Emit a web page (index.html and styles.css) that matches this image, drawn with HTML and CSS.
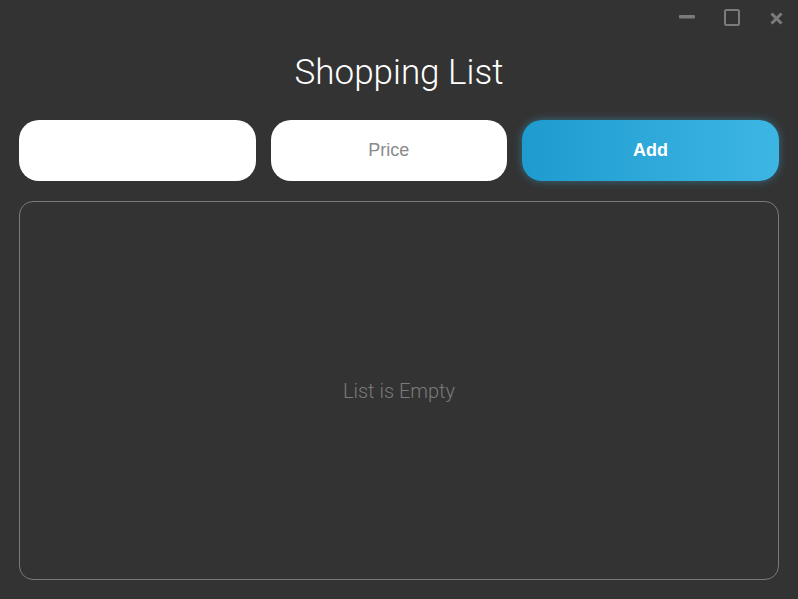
FILE: index.html
```html
<!DOCTYPE html>
<html>
<head>
<meta charset="utf-8">
<link rel="stylesheet" href="styles.css">
</head>
<body>
<div class="app">
  <div class="titlebar">
    <svg class="ctl" viewBox="0 0 20 20" width="20" height="20"><rect x="2" y="7" width="16" height="3.5" rx="1" fill="#7b7b7b"/></svg>
    <svg class="ctl" viewBox="0 0 20 20" width="20" height="20"><rect x="3" y="2" width="14" height="15" rx="1.5" fill="none" stroke="#7b7b7b" stroke-width="2"/></svg>
    <svg class="ctl" viewBox="0 0 20 20" width="20" height="20"><path d="M4.5 5.5 L14.5 15.5 M14.5 5.5 L4.5 15.5" stroke="#7b7b7b" stroke-width="3" stroke-linecap="butt"/></svg>
  </div>
  <h1 class="title">Shopping List</h1>
  <div class="form">
    <input class="field" type="text">
    <input class="field" type="text" placeholder="Price">
    <button class="add">Add</button>
  </div>
  <div class="list">
    <span class="empty">List is Empty</span>
  </div>
</div>
</body>
</html>
```
FILE: styles.css
```css
html, body {
  margin: 0;
  padding: 0;
  background: #333333;
  width: 798px;
  height: 599px;
  overflow: hidden;
}
.app {
  display: flex;
  flex-direction: column;
  height: 599px;
  box-sizing: border-box;
  padding: 0 19px 19px 19px;
}
.titlebar {
  display: flex;
  justify-content: flex-end;
  gap: 25px;
  padding-top: 8px;
  margin-right: -8px;
  height: 53px;
  box-sizing: border-box;
}
.ctl {
  display: block;
}
.title {
  margin: 0;
  text-align: center;
  font-family: Roboto, "Liberation Sans", sans-serif;
  font-weight: 300;
  font-size: 35px;
  line-height: 40px;
  color: #ffffff;
}
.form {
  display: grid;
  grid-template-columns: 1fr 1fr 257px;
  gap: 15px;
  margin-top: 27px;
  height: 61px;
}
.field {
  border: none;
  outline: none;
  background: #ffffff;
  border-radius: 20px;
  height: 61px;
  box-sizing: border-box;
  text-align: center;
  font-family: "Liberation Sans", Arial, sans-serif;
  font-size: 18px;
  color: #333;
  padding: 0 10px;
  min-width: 0;
}
.field::placeholder {
  color: #8a8a8a;
}
.add {
  border: none;
  outline: none;
  border-radius: 20px;
  height: 61px;
  background: linear-gradient(90deg, #1e9bcf 0%, #3db6e4 100%);
  box-shadow: 0 0 8px rgba(61, 182, 228, 0.45);
  color: #ffffff;
  font-family: "Liberation Sans", Arial, sans-serif;
  font-weight: bold;
  font-size: 18px;
  cursor: pointer;
}
.list {
  flex: 1;
  margin-top: 20px;
  border: 1px solid #7a7a7a;
  border-radius: 14px;
  display: flex;
  align-items: center;
  justify-content: center;
}
.empty {
  font-family: Roboto, "Liberation Sans", sans-serif;
  font-weight: 300;
  font-size: 20px;
  color: #7a7a7a;
}
```
